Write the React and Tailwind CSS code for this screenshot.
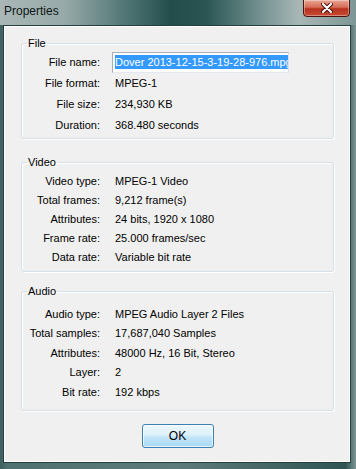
const font = { fontFamily: '"Liberation Sans", Arial, sans-serif' };

function Row({ label, value, tall }) {
  return (
    <div className={`flex items-center ${tall ? "h-[19.5px]" : "h-[19px]"}`}>
      <span className="w-[78px] shrink-0 text-right">{label}</span>
      <span className="ml-[15px] whitespace-nowrap">{value}</span>
    </div>
  );
}

function Group({ title, className, children }) {
  return (
    <fieldset
      className={`rounded-[3px] border border-[#d5dfe5] shadow-[inset_1px_1px_0_#fff,1px_1px_0_#fff] ${className}`}
    >
      <legend className="ml-[5px] px-[1px] leading-[14px]">{title}</legend>
      {children}
    </fieldset>
  );
}

export default function App() {
  return (
    <div
      className="w-[356px] h-[469px] flex flex-col overflow-hidden bg-[linear-gradient(90deg,#3d6160_0%,#4f7170_2%,#5d7b7a_50%,#2f5453_97%,#7d9695_100%)] text-[11px] text-black"
      style={font}
    >
      {/* Title bar */}
      <div className="h-[25px] shrink-0 flex items-start justify-between bg-[linear-gradient(90deg,#a9b7b6_0%,#97aaa9_18%,#567a79_34%,#224d4b_48%,#2a5553_58%,#6e8d8c_72%,#a8b7b6_84%,#7c9695_100%)]">
        <span className="ml-[4px] mt-[4px] text-[12px] leading-[14px] text-[#0d1616]">Properties</span>
        <div className="mr-[6px] w-[47px] h-[18px] -mt-[1px] rounded-b-[4px] border border-[#4a1410] bg-[linear-gradient(180deg,#e9a593_0%,#d46c58_45%,#b8321e_55%,#c74b36_100%)] shadow-[inset_0_0_0_1px_rgba(255,255,255,0.35)] flex items-center justify-center">
          <svg width="12" height="10" viewBox="0 0 12 10">
            <path d="M2 1 L10 9 M10 1 L2 9" stroke="#3a0d08" strokeWidth="4" strokeLinecap="round" />
            <path d="M2 1 L10 9 M10 1 L2 9" stroke="#fff" strokeWidth="2.2" strokeLinecap="round" />
          </svg>
        </div>
      </div>

      {/* Client area */}
      <div className="ml-[3px] mr-[5px] mb-[6px] flex-1 border border-[#23403f] bg-[#f0f0f0] shadow-[inset_1px_1px_0_#ffffff,inset_-1px_-1px_0_#ffffff] flex flex-col pl-[17px] pr-[16px]">
        <Group title="File" className="mt-[10px] pt-[2px] pb-[2px]">
          <div className="flex items-center h-[21px]">
            <span className="w-[78px] shrink-0 text-right">File name:</span>
            <div className="ml-[12px] w-[177px] h-[21px] border border-[#abadb3] border-r-[#dbdfe6] border-b-[#e3e9ef] bg-white overflow-hidden whitespace-nowrap pl-[2px] pt-[1px]">
              <span className="inline-block bg-[#3399ff] text-white leading-[14px] pr-[6px]">
                Dover 2013-12-15-3-19-28-976.mpg
              </span>
            </div>
          </div>
          <div className="flex items-center h-[21px]">
            <span className="w-[78px] shrink-0 text-right">File format:</span>
            <span className="ml-[15px]">MPEG-1</span>
          </div>
          <div className="flex items-center h-[21px]">
            <span className="w-[78px] shrink-0 text-right">File size:</span>
            <span className="ml-[15px]">234,930 KB</span>
          </div>
          <div className="flex items-center h-[21px]">
            <span className="w-[78px] shrink-0 text-right">Duration:</span>
            <span className="ml-[15px]">368.480 seconds</span>
          </div>
        </Group>

        <Group title="Video" className="mt-[16px] pt-[3px] pb-[4px]">
          <Row label="Video type:" value="MPEG-1 Video" />
          <Row label="Total frames:" value="9,212 frame(s)" />
          <Row label="Attributes:" value="24 bits, 1920 x 1080" />
          <Row label="Frame rate:" value="25.000 frames/sec" />
          <Row label="Data rate:" value="Variable bit rate" />
        </Group>

        <Group title="Audio" className="mt-[12px] pt-[6px] pb-[8px]">
          <Row tall label="Audio type:" value="MPEG Audio Layer 2 Files" />
          <Row tall label="Total samples:" value="17,687,040 Samples" />
          <Row tall label="Attributes:" value="48000 Hz, 16 Bit, Stereo" />
          <Row tall label="Layer:" value="2" />
          <Row tall label="Bit rate:" value="192 kbps" />
        </Group>

        <div className="mt-[13px] flex justify-center">
          <button className="w-[72px] h-[24px] rounded-[3px] border border-[#3c7fb1] bg-[linear-gradient(180deg,#edf8fe_0%,#dcf0fb_45%,#c2e5f8_55%,#a9d9f4_100%)] shadow-[inset_0_0_0_1px_rgba(255,255,255,0.7)] text-[12px] leading-none text-black">
            OK
          </button>
        </div>
      </div>
    </div>
  );
}
